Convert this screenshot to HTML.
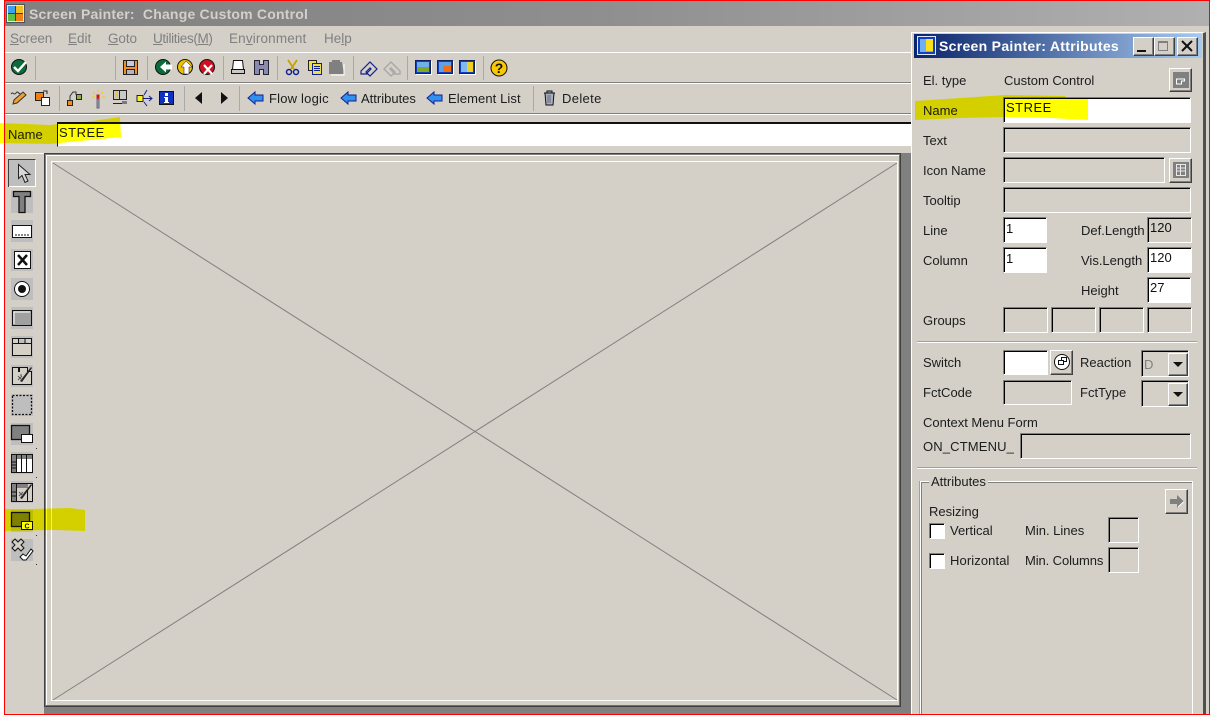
<!DOCTYPE html>
<html><head><meta charset="utf-8"><title>Screen Painter</title>
<style>
html,body{margin:0;padding:0;width:1210px;height:715px;overflow:hidden;background:#fff}
#p{position:relative;width:1210px;height:715px;overflow:hidden;background:#fff;isolation:isolate}
.a{position:absolute}
.t{position:absolute;white-space:nowrap;font:13px/16px "Liberation Sans",sans-serif;color:#1c1c1c}
.m{color:#808080;font-size:13.500px}
.m u{text-decoration:underline}
.f{position:absolute;box-sizing:border-box;border:1px solid #fff;border-top-color:#808080;border-left-color:#808080;box-shadow:inset 1px 1px 0 #000;background:#d4d0c8}
.w{background:#fff}
.b{position:absolute;box-sizing:border-box;border:1px solid #404040;border-top-color:#fff;border-left-color:#fff;box-shadow:inset -1px -1px 0 #808080;background:#d4d0c8}
.v{font-size:13px;line-height:14px;color:#111}
</style></head><body><div id="p">
<div class="a" style="left:5px;top:1px;width:1204px;height:713px;background:#d4d0c8"></div>
<div class="a" style="left:5px;top:1px;width:1204px;height:25px;background:linear-gradient(90deg,#808080,#8f8f8f 50%,#b0b0b0)"></div>
<svg class="a" style="left:6px;top:4px" width="20" height="20"><rect x=".5" y=".5" width="18" height="18" fill="#e8e8e8" stroke="#505060"/><rect x="2" y="2" width="7" height="7" fill="#40a0f0"/><rect x="10" y="2" width="7" height="7" fill="#f0c020"/><rect x="2" y="10" width="7" height="7" fill="#60c040"/><rect x="10" y="10" width="7" height="7" fill="#f08010"/><path d="M2 9.500h15M9.500 2v15" stroke="#303870"/></svg>
<div class="t" style="left:29px;top:6px;font-size:14px;font-weight:bold;color:#d4d0c8;letter-spacing:.2px">Screen Painter:&nbsp; Change Custom Control</div>
<div class="t m" style="left:10px;top:31px;letter-spacing:-.1px"><u>S</u>creen</div>
<div class="t m" style="left:68px;top:31px"><u>E</u>dit</div>
<div class="t m" style="left:108px;top:31px;letter-spacing:-.1px"><u>G</u>oto</div>
<div class="t m" style="left:153px;top:31px;letter-spacing:-.35px"><u>U</u>tilities(<u>M</u>)</div>
<div class="t m" style="left:229px;top:31px;letter-spacing:.15px">En<u>v</u>ironment</div>
<div class="t m" style="left:324px;top:31px"> He<u>l</u>p</div>
<div class="a" style="left:5px;top:52px;width:910px;height:1px;background:#fff"></div>
<div class="a" style="left:5px;top:82px;width:910px;height:1px;background:#808080"></div>
<div class="a" style="left:5px;top:83px;width:910px;height:1px;background:#fff"></div>
<div class="a" style="left:5px;top:113px;width:910px;height:1px;background:#808080"></div>
<div class="a" style="left:5px;top:114px;width:910px;height:1px;background:#fff"></div>
<div class="t" style="left:8px;top:127px">Name</div>
<div class="a" style="left:57px;top:122px;width:860px;height:25px;box-sizing:border-box;background:#fff;border-top:2px solid #111;border-left:1px solid #111;border-bottom:1px solid #d4d0c8"></div>
<div class="t" style="left:59px;top:125px;letter-spacing:.5px">STREE</div>
<div class="a" style="left:5px;top:153px;width:39px;height:1px;background:#fff"></div>
<div class="a" style="left:44px;top:153px;width:870px;height:561px;background:#808080"></div>
<div class="a" style="left:44px;top:153px;width:857px;height:554px;box-sizing:border-box;border:1px solid #404040;box-shadow:inset 1px 1px 0 #808080,inset -1px -1px 0 #707070;background:#d4d0c8"></div>
<div class="a" style="left:46px;top:155px;width:853px;height:550px;box-sizing:border-box;border-left:1px solid #fff;border-top:1px solid #fff"></div>
<div class="a" style="left:51px;top:161px;width:847px;height:540px;box-sizing:border-box;border:1px solid #fff"></div>
<svg class="a" style="left:0;top:0" width="1210" height="715" viewBox="0 0 1210 715">
<path d="M53 163L897 700M53 700L897 163" stroke="#808080" stroke-width="1" fill="none"/>
<g fill="#a8a8a8">
<rect x="35" y="56" width="1" height="24"/><rect x="115" y="56" width="1" height="24"/><rect x="147" y="56" width="1" height="24"/><rect x="223" y="56" width="1" height="24"/><rect x="277" y="56" width="1" height="24"/><rect x="353" y="56" width="1" height="24"/><rect x="407" y="56" width="1" height="24"/><rect x="483" y="56" width="1" height="24"/>
<rect x="59" y="86" width="1" height="25"/><rect x="184" y="86" width="1" height="25"/><rect x="239" y="86" width="1" height="25"/><rect x="533" y="86" width="1" height="25"/>
</g>
<!-- toolbar 1 -->
<circle cx="19" cy="67" r="7.500" fill="#0c6b3a" stroke="#111"/><path d="M14 67l4 4 8-9" stroke="#fff" stroke-width="2.400" fill="none"/>
<rect x="123.500" y="60.500" width="14" height="14" fill="#f09020" stroke="#222"/><rect x="126.500" y="60.500" width="8" height="6" fill="#c8c8e0" stroke="#222"/><rect x="126.500" y="69.500" width="8" height="5" fill="#b8b0c8" stroke="#222"/>
<circle cx="163" cy="67" r="7.500" fill="#0c6b3a" stroke="#111"/><path d="M172 64.500h-6v-3l-6 5.500 6 5.500v-3h6z" fill="#fff"/>
<circle cx="185" cy="67" r="7.500" fill="#f0c000" stroke="#111"/><path d="M186 61l-5 6h3v7h5v-7h3z" fill="#fff" stroke="#111" stroke-width=".5"/>
<circle cx="207" cy="67" r="7.500" fill="#d01020" stroke="#111"/><path d="M204 65l8 9M212 65l-8 9" stroke="#fff" stroke-width="2.200"/>
<path d="M233.500 60.500h9l1 9h-11z" fill="#fff" stroke="#111"/><rect x="231.500" y="69.500" width="13" height="4" fill="#c8c8c8" stroke="#111"/>
<path d="M254.500 60.500h5v4h4v-4h5v14h-5v-5h-4v5h-5z" fill="#8a8ab0" stroke="#223"/>
<path d="M288 60l6 9M297 60l-6 9" stroke="#c8a000" stroke-width="1.800"/><circle cx="289" cy="72" r="2.500" fill="none" stroke="#102090" stroke-width="1.500"/><circle cx="296" cy="72" r="2.500" fill="none" stroke="#102090" stroke-width="1.500"/>
<rect x="308.500" y="60.500" width="8" height="10" fill="#f0e040" stroke="#222"/><rect x="312.500" y="63.500" width="9" height="11" fill="#f0e040" stroke="#102090"/><path d="M314 66.500h6M314 68.500h6M314 70.500h6" stroke="#102090"/>
<path d="M329 62h3v-2h8v2h2l2 12h-15z" fill="#808080"/><path d="M344 64v11h-13" stroke="#fff" fill="none"/>
<path d="M361 71l9-9 7 7-7 7-3-3 4-4-1-1-4 4 1 2h-6z" fill="#d4d0c8" stroke="#102090" stroke-width="1.200"/>
<path d="M400 71l-9-9-7 7 7 7 3-3-4-4 1-1 4 4-1 2h6z" fill="#d4d0c8" stroke="#a8a8a8" stroke-width="1.400"/>
<rect x="415.500" y="60.500" width="15" height="13" fill="#1040c0" stroke="#102060"/><rect x="417" y="62" width="12" height="10" fill="#70b0e8"/><rect x="417" y="67" width="12" height="5" fill="#80a820"/>
<rect x="437.500" y="60.500" width="15" height="13" fill="#1040c0" stroke="#102060"/><rect x="439" y="62" width="12" height="10" fill="#60a0e8"/><rect x="443" y="66" width="8" height="6" fill="#f07010"/>
<rect x="459.500" y="60.500" width="15" height="13" fill="#1040c0" stroke="#102060"/><rect x="461" y="62" width="12" height="10" fill="#80b8f0"/><rect x="467" y="62" width="6" height="10" fill="#f0d020"/>
<path d="M432 74.500h-16M454 74.500h-16M476 74.500h-16M431.500 61v14M453.500 61v14M475.500 61v14" stroke="#fff"/>
<circle cx="499" cy="68" r="8" fill="#f8c800" stroke="#111"/><text x="499" y="73" font-family="Liberation Sans" font-size="14" font-weight="bold" text-anchor="middle" fill="#111">?</text>
<!-- toolbar 2 -->
<path d="M14 100l9-8 3 3-9 8-4 1z" fill="#f0a030" stroke="#333"/><path d="M11 94c2-3 3 2 5-1s3 2 4 0" stroke="#333" fill="none"/>
<rect x="35.500" y="92.500" width="8" height="8" fill="#f08010" stroke="#222"/><rect x="41.500" y="97.500" width="8" height="8" fill="#fff" stroke="#222"/><path d="M43 91h4v3" fill="none" stroke="#222"/>
<rect x="67.500" y="100.500" width="5" height="5" fill="#f09010" stroke="#222"/><rect x="76.500" y="94.500" width="5" height="5" fill="#90b040" stroke="#222"/><path d="M70 100v-4l3-4h3v3" fill="none" stroke="#333"/>
<rect x="97" y="99" width="2" height="9" fill="#a0a0b0" stroke="#667"/><rect x="96.500" y="94.500" width="3" height="4" fill="#e01010"/><path d="M93 92l2 2M103 92l-2 2M98 89v3M92 97h3M102 97h3" stroke="#f0d000"/>
<rect x="113.500" y="90.500" width="13" height="9" fill="#c8c8c8" stroke="#222"/><rect x="115" y="92" width="3" height="6" fill="#f0c040"/><path d="M119.500 91v8M113 103.500h14" stroke="#222"/><rect x="122" y="101" width="5" height="3" fill="#778"/>
<rect x="137" y="95.500" width="6" height="6" fill="#f8f030" stroke="#222"/><path d="M143 98.500h9M149 96l3 2.500-3 2.500M144 95l3-5M144 102l3 4" fill="none" stroke="#102090"/>
<rect x="159.500" y="91.500" width="14" height="13" fill="#1030c0" stroke="#111"/><path d="M165 93h3v3h-3zM164 97h4v5h1v1h-5v-1h1v-4h-1z" fill="#fff"/>
<path d="M202 92v12l-7-6zM221 92v12l7-6z" fill="#111"/>
<g fill="#3090f0" stroke="#102090"><path d="M248 98l7-6v3h8v6h-8v3z"/><path d="M341 98l7-6v3h8v6h-8v3z"/><path d="M427 98l7-6v3h8v6h-8v3z"/></g>
<path d="M544 93h11M545 93l1 12h7l1-12M547 93v-2h5v2" fill="#a8b0c0" stroke="#111"/><path d="M548 95v8M550 95v8" stroke="#667"/>
<!-- palette -->
<rect x="8.500" y="159.500" width="27" height="27" fill="#bebebe" stroke="#fff"/><path d="M8.500 187v-27.500h27" stroke="#404040" fill="none"/>
<path d="M18.500 164.500v14l3.500-3 3 7 3-1.500-3-6.500h5z" fill="#d8d8d8" stroke="#222"/>
<g fill="#bebebe"><rect x="11" y="191" width="22" height="22"/><rect x="11" y="220" width="22" height="22"/><rect x="11" y="249" width="22" height="22"/><rect x="11" y="278" width="22" height="22"/><rect x="11" y="307" width="22" height="22"/><rect x="11" y="336" width="22" height="22"/><rect x="11" y="365" width="22" height="22"/><rect x="11" y="394" width="22" height="22"/><rect x="11" y="423" width="22" height="22"/><rect x="11" y="452" width="22" height="22"/><rect x="11" y="481" width="22" height="22"/><rect x="11" y="510" width="22" height="22"/><rect x="11" y="539" width="22" height="22"/></g>
<path d="M13.500 191.500h17v5h-5.500v16h-6v-16h-5.500z" fill="#808080" stroke="#111" stroke-width="1.300"/>
<rect x="12.500" y="225.500" width="19" height="12" fill="#fff" stroke="#111"/><path d="M15 235h15" stroke="#111" stroke-dasharray="2 1"/>
<rect x="14.500" y="251.500" width="16" height="17" fill="#fff" stroke="#111"/><path d="M18 255l9 10M27 255l-9 10" stroke="#111" stroke-width="2.500"/>
<circle cx="22" cy="289" r="7.500" fill="#fff" stroke="#111"/><circle cx="22" cy="289" r="4" fill="#111"/>
<rect x="12.500" y="310.500" width="19" height="15" fill="#a0a0a0" stroke="#111"/><path d="M14 324v-12h16" stroke="#fff" fill="none"/>
<path d="M12.500 355.500v-17h6v5h-6h19v12zM18.500 338.500h13v5" fill="#d4d0c8" stroke="#111"/><path d="M25 339v4" stroke="#111"/>
<path d="M12.500 384.500v-17h6v4h1v-4h8v4h4v13z" fill="#d4d0c8" stroke="#111"/><path d="M20 381l11-14 1 1-10 14z" fill="#222"/><path d="M18 376l4 4M22 376l-4 4M21 374v2" stroke="#555"/>
<rect x="12.500" y="395.500" width="19" height="19" fill="#bebebe" stroke="#111" stroke-width="1.300" stroke-dasharray="2 1.500"/>
<rect x="11.500" y="425.500" width="18" height="14" fill="#808080" stroke="#111" stroke-width="1.300"/><rect x="21.500" y="434.500" width="11" height="8" fill="#fff" stroke="#111"/>
<rect x="11.500" y="454.500" width="21" height="18" fill="#fff" stroke="#111"/><path d="M11.500 458.500h21" stroke="#111"/><rect x="12" y="455" width="20" height="4" fill="#808080"/><rect x="12" y="459" width="4" height="13" fill="#808080"/><path d="M16.500 455v17M21.500 455v17M26.500 455v17M12 462h4M12 465h4M12 468h4" stroke="#111"/>
<rect x="11.500" y="483.500" width="21" height="18" fill="#d4d0c8" stroke="#111"/><rect x="12" y="484" width="16" height="4" fill="#808080"/><rect x="12" y="488" width="4" height="13" fill="#808080"/><path d="M16.500 484v17M27.500 490v11M12 492h4M12 496h4" stroke="#111"/><path d="M20 498l11-14 1 1-10 14z" fill="#222"/><path d="M19 492l4 4M23 492l-4 4" stroke="#555"/>
<rect x="11.500" y="512.500" width="18" height="14" fill="#808080" stroke="#111" stroke-width="1.300"/><rect x="21.500" y="521.500" width="11" height="8" fill="#ffff00" stroke="#111"/><text x="27" y="528.500" font-family="Liberation Sans" font-size="7" font-weight="bold" text-anchor="middle" fill="#111">C</text>
<path d="M12 542l3-3 3 3 3-3 3 3-3 3 3 3-3 3-3-3-3 3-3-3 3-3z" fill="#d4d0c8" stroke="#111"/><path d="M20 557l3-3 3 2 5-7 2 2-7 9h-3z" fill="#fff" stroke="#111"/>
<g fill="#333"><rect x="36" y="448" width="1" height="1"/><rect x="36" y="477" width="1" height="1"/><rect x="36" y="535" width="1" height="1"/><rect x="36" y="564" width="1" height="1"/></g>
</svg>
<div class="t" style="left:269px;top:91px;letter-spacing:.2px">Flow logic</div>
<div class="t" style="left:361px;top:91px">Attributes</div>
<div class="t" style="left:448px;top:91px;letter-spacing:.1px">Element List</div>
<div class="t" style="left:562px;top:91px;letter-spacing:.35px">Delete</div>
<!-- dialog -->
<div class="a" style="left:911px;top:32px;width:295px;height:690px;box-sizing:border-box;background:#d4d0c8;border:1px solid #d4d0c8;border-top-color:#fff;border-left-color:#fff;border-right:3px solid #505050"></div>
<div class="a" style="left:914px;top:34px;width:288px;height:24px;background:linear-gradient(90deg,#0a246a,#a6caf0)"></div>
<svg class="a" style="left:917px;top:36px" width="20" height="20"><rect x=".5" y=".5" width="18" height="18" fill="#1040c0" stroke="#dfe6f5"/><rect x="3" y="3" width="13" height="13" fill="#70b0f0"/><rect x="9" y="3" width="7" height="12" fill="#f8e020"/></svg>
<div class="t" style="left:939px;top:38px;font-size:14px;font-weight:bold;color:#fff;letter-spacing:.3px">Screen Painter: Attributes</div>
<div class="b" style="left:1133px;top:37px;width:21px;height:19px"></div><div class="a" style="left:1137px;top:50px;width:9px;height:2px;background:#111"></div>
<div class="b" style="left:1154px;top:37px;width:21px;height:19px"></div><div class="a" style="left:1158px;top:41px;width:10px;height:10px;box-sizing:border-box;border:1px solid #808080;border-top-width:2px"></div>
<div class="b" style="left:1177px;top:37px;width:21px;height:19px"></div>
<svg class="a" style="left:1177px;top:37px" width="21" height="19"><path d="M5 4l10 10M15 4l-10 10" stroke="#111" stroke-width="2"/></svg>
<div class="t" style="left:923px;top:73px">El. type</div><div class="t" style="left:1004px;top:73px">Custom Control</div>
<div class="b" style="left:1169px;top:68px;width:23px;height:24px"></div>
<svg class="a" style="left:1172px;top:71px" width="17" height="18"><rect x="1" y="1" width="16" height="16" fill="#808080"/><path d="M4.500 13v-5h8v2h-3v3z" fill="none" stroke="#fff"/></svg>
<div class="t" style="left:923px;top:103px">Name</div><div class="f w" style="left:1003px;top:97px;width:188px;height:26px"></div><div class="t v" style="left:1006px;top:101px;letter-spacing:.5px">STREE</div>
<div class="t" style="left:923px;top:133px">Text</div><div class="f" style="left:1003px;top:127px;width:188px;height:26px"></div>
<div class="t" style="left:923px;top:163px">Icon Name</div><div class="f" style="left:1003px;top:157px;width:162px;height:26px"></div>
<div class="b" style="left:1169px;top:158px;width:23px;height:25px"></div>
<svg class="a" style="left:1172px;top:161px" width="17" height="18"><rect x="1" y="1" width="16" height="16" fill="#808080"/><path d="M4.500 3.500h9v11h-9zM8.500 4v10M5 7h8M5 10h8" fill="none" stroke="#e8e8e8"/></svg>
<div class="t" style="left:923px;top:193px">Tooltip</div><div class="f" style="left:1003px;top:187px;width:188px;height:26px"></div>
<div class="t" style="left:923px;top:223px">Line</div><div class="f w" style="left:1003px;top:217px;width:44px;height:26px"></div><div class="t v" style="left:1006px;top:222px">1</div>
<div class="t" style="left:1081px;top:223px">Def.Length</div><div class="f" style="left:1147px;top:217px;width:45px;height:26px"></div><div class="t v" style="left:1150px;top:221px">120</div>
<div class="t" style="left:923px;top:253px">Column</div><div class="f w" style="left:1003px;top:247px;width:44px;height:26px"></div><div class="t v" style="left:1006px;top:252px">1</div>
<div class="t" style="left:1081px;top:253px">Vis.Length</div><div class="f w" style="left:1147px;top:247px;width:45px;height:26px"></div><div class="t v" style="left:1150px;top:251px">120</div>
<div class="t" style="left:1081px;top:283px">Height</div><div class="f w" style="left:1147px;top:277px;width:44px;height:26px"></div><div class="t v" style="left:1150px;top:281px">27</div>
<div class="t" style="left:923px;top:313px">Groups</div>
<div class="f" style="left:1003px;top:307px;width:45px;height:26px"></div><div class="f" style="left:1051px;top:307px;width:45px;height:26px"></div><div class="f" style="left:1099px;top:307px;width:45px;height:26px"></div><div class="f" style="left:1147px;top:307px;width:45px;height:26px"></div>
<div class="a" style="left:917px;top:342px;width:280px;height:1px;background:#fff;box-shadow:0 -1px 0 #a0a0a0"></div>
<div class="t" style="left:923px;top:355px">Switch</div><div class="f w" style="left:1003px;top:350px;width:45px;height:25px"></div>
<div class="b" style="left:1050px;top:350px;width:23px;height:25px"></div>
<svg class="a" style="left:1053px;top:353px" width="18" height="18"><circle cx="9" cy="9" r="7.500" fill="#fff" stroke="#111"/><rect x="8.500" y="4.500" width="5" height="4" fill="#fff" stroke="#111"/><rect x="5.500" y="7.500" width="5" height="4" fill="#fff" stroke="#111"/></svg>
<div class="t" style="left:1080px;top:355px">Reaction</div><div class="f" style="left:1141px;top:350px;width:48px;height:27px"></div><div class="t v" style="left:1144px;top:358px;color:#808080">D</div>
<div class="b" style="left:1168px;top:353px;width:20px;height:23px"></div><svg class="a" style="left:1172px;top:361px" width="12" height="7"><path d="M1 1h10l-5 5z" fill="#111"/></svg>
<div class="t" style="left:923px;top:385px">FctCode</div><div class="f" style="left:1003px;top:380px;width:69px;height:25px"></div>
<div class="t" style="left:1080px;top:385px">FctType</div><div class="f" style="left:1141px;top:380px;width:48px;height:27px"></div>
<div class="b" style="left:1168px;top:383px;width:20px;height:23px"></div><svg class="a" style="left:1172px;top:391px" width="12" height="7"><path d="M1 1h10l-5 5z" fill="#111"/></svg>
<div class="t" style="left:923px;top:415px">Context Menu Form</div>
<div class="t" style="left:923px;top:439px;letter-spacing:.15px">ON_CTMENU_</div><div class="f" style="left:1020px;top:433px;width:171px;height:26px"></div>
<div class="a" style="left:917px;top:468px;width:280px;height:1px;background:#fff;box-shadow:0 -1px 0 #a0a0a0"></div>
<div class="a" style="left:920px;top:481px;width:273px;height:240px;box-sizing:border-box;border:1px solid #fff;box-shadow:inset 1px 1px 0 #808080,-1px 0 0 #a0a0a0"></div>
<div class="t" style="left:929px;top:474px;background:#d4d0c8;padding:0 2px">Attributes</div>
<div class="b" style="left:1165px;top:489px;width:23px;height:25px"></div>
<svg class="a" style="left:1169px;top:494px" width="16" height="15"><path d="M1 5h7V1l7 6.500-7 6.500v-4H1z" fill="#808080"/><path d="M9 13l6-5.500" stroke="#fff"/></svg>
<div class="t" style="left:929px;top:504px">Resizing</div>
<div class="f w" style="left:929px;top:523px;width:16px;height:16px"></div><div class="t" style="left:950px;top:523px">Vertical</div>
<div class="t" style="left:1025px;top:523px">Min. Lines</div><div class="f" style="left:1108px;top:517px;width:31px;height:26px"></div>
<div class="f w" style="left:929px;top:553px;width:16px;height:16px"></div><div class="t" style="left:950px;top:553px;letter-spacing:.1px">Horizontal</div>
<div class="t" style="left:1025px;top:553px;letter-spacing:-.1px">Min. Columns</div><div class="f" style="left:1108px;top:547px;width:31px;height:26px"></div>
<!-- highlighter -->
<svg class="a" style="left:0;top:0;mix-blend-mode:multiply" width="1210" height="715">
<path fill="#ffff00" d="M0 123L50 125L57 124L85 122L120 117L121 137L80 141L50 144L0 143Z"/>
<path fill="#ffff00" d="M5 509L30 509L70 508L85 510V531L55 530L5 531Z"/>
<path fill="#ffff00" d="M915 101L975 97L1005 95L1065 96L1066 99L1088 99L1088 120L1050 118L1005 117L960 118L915 120Z"/>
</svg>
<!-- red frame -->
<div class="a" style="left:4px;top:0;width:1206px;height:715px;box-sizing:border-box;border:1px solid #f00"></div>
</div></body></html>
